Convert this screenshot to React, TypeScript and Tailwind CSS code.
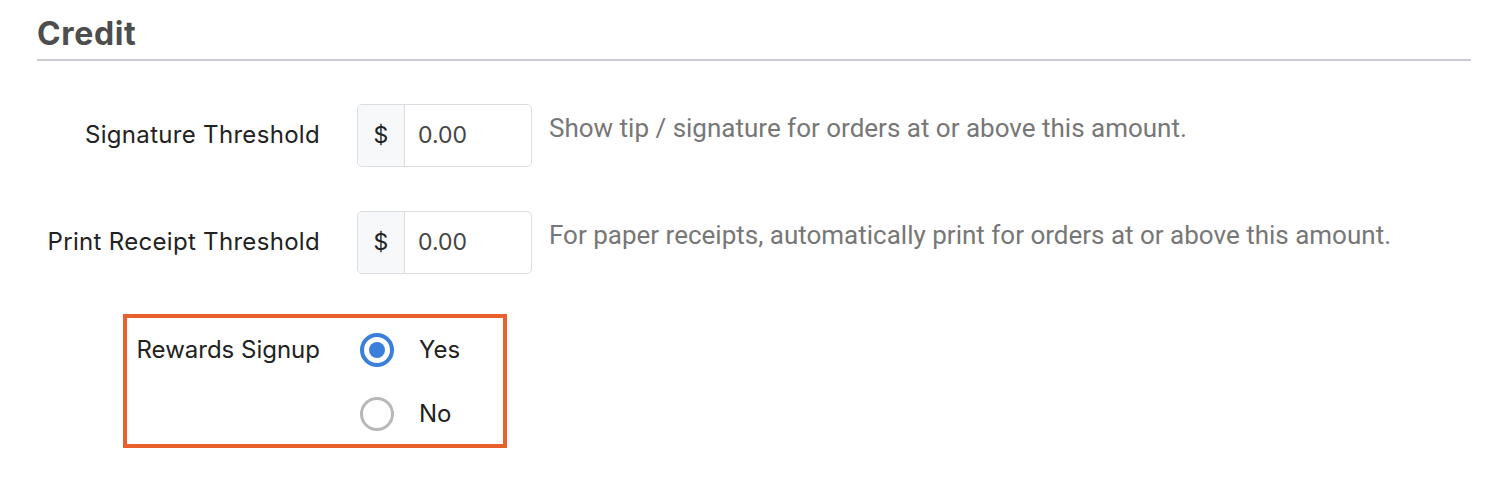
import React from 'react';

const labelFont = { fontFamily: 'Inter, "Noto Sans", sans-serif' };

const MoneyRow = ({ label, help }: { label: string; help: string }) => (
  <div className="flex items-start">
    <div className="w-[320px] h-[62px] flex items-center justify-end text-[24px] tracking-[0.013em] text-[#222]">
      {label}
    </div>
    <div className="ml-[37px] flex w-[175px] h-[63px] rounded-[5px] border border-[#dcdde2] overflow-hidden">
      <div className="w-[47px] flex items-center justify-center bg-[#f7f8fa] border-r border-[#dcdde2] text-[23px] text-[#222]">
        $
      </div>
      <div className="flex-1 flex items-center pl-[13px] text-[23px] text-[#444]">0.00</div>
    </div>
    <p className="ml-[17px] pt-[9px] text-[26px] leading-[30px] text-[#777] font-['Roboto',sans-serif]">{help}</p>
  </div>
);

const Radio = ({ checked, label }: { checked: boolean; label: string }) => (
  <div className="flex items-center h-[34px]">
    {checked ? (
      <span className="w-[34px] h-[34px] rounded-full border-[4px] border-[#3a7fdc] flex items-center justify-center">
        <span className="w-[16px] h-[16px] rounded-full bg-[#3a7fdc]" />
      </span>
    ) : (
      <span className="w-[34px] h-[34px] rounded-full border-[3px] border-[#b8b8b8]" />
    )}
    <span className="ml-[25px] text-[24px] text-[#222]">{label}</span>
  </div>
);

export default function App() {
  return (
    <div className="w-[1500px] h-[484px] bg-white pl-[37px] pr-[29px] pt-[14px]" style={labelFont}>
      <h2 className="text-[32px] font-bold text-[#4d4d4d] leading-[40px] tracking-[0.02em]">Credit</h2>
      <div className="mt-[5px] h-[2px] bg-[#cbcbd1]" />

      <div className="mt-[43px] flex flex-col gap-[44px] -ml-[37px]">
        <MoneyRow label="Signature Threshold" help="Show tip / signature for orders at or above this amount." />
        <MoneyRow
          label="Print Receipt Threshold"
          help="For paper receipts, automatically print for orders at or above this amount."
        />
      </div>

      <div className="mt-[40px] ml-[86px] w-[384px] h-[134px] border-[4px] border-[#e8602c] flex items-start pt-[15px]">
        <div className="w-[193px] h-[34px] flex items-center justify-end text-[24px] text-[#222]">
          Rewards Signup
        </div>
        <div className="ml-[40px] flex flex-col gap-[30px]">
          <Radio checked label="Yes" />
          <Radio checked={false} label="No" />
        </div>
      </div>
    </div>
  );
}
